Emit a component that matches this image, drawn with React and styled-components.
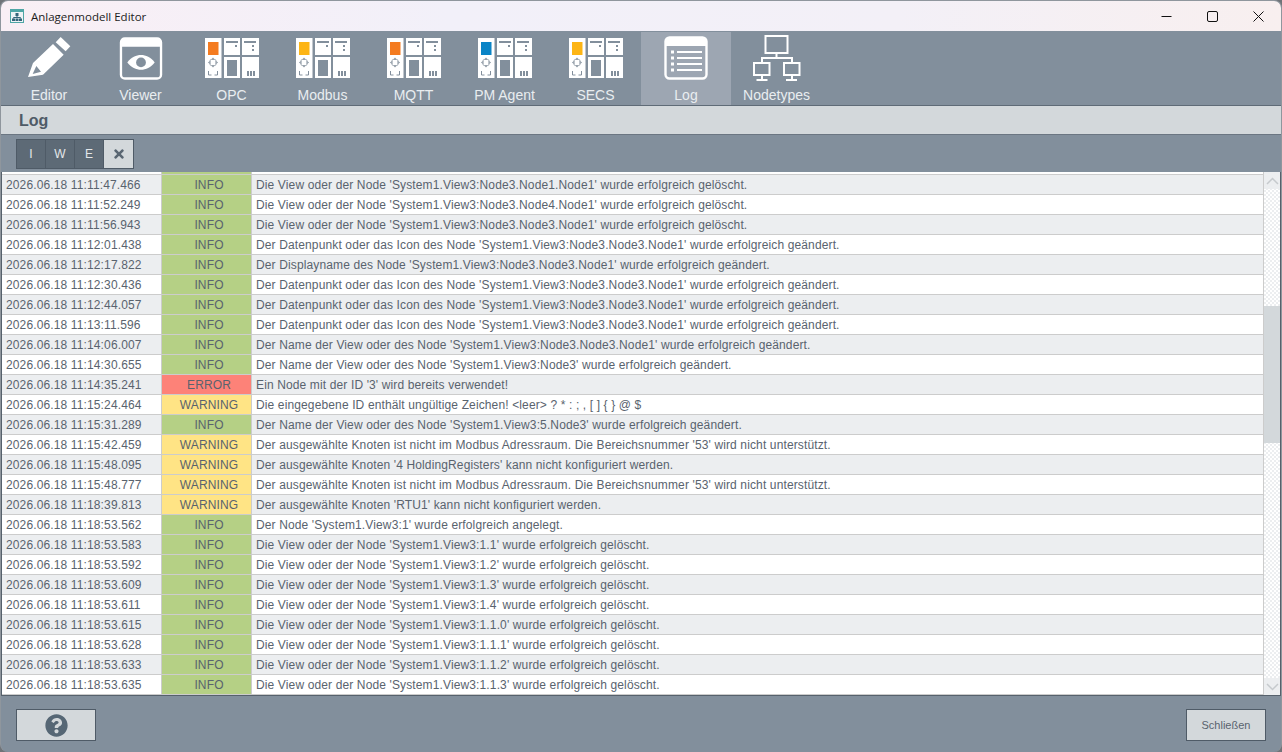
import React from 'react'
import styled, { createGlobalStyle } from 'styled-components'
import { FaQuestionCircle, FaTimes } from 'react-icons/fa'

const GlobalStyle = createGlobalStyle`
    html, body {
        margin: 0;
        padding: 0;
        background: #6f7378;
    }
    * {
        box-sizing: border-box;
    }
`

const Window = styled.div`
    width: 1282px;
    height: 752px;
    display: flex;
    flex-direction: column;
    overflow: hidden;
    background: #828f9c;
    border: 1px solid #8f969d;
    border-bottom: 0;
    border-radius: 8px;
    font-family: 'Liberation Sans', Arial, sans-serif;
`

const TitleBar = styled.div`
    height: 30px;
    flex: none;
    display: flex;
    align-items: center;
    padding-left: 9px;
    background: linear-gradient(90deg, #f9eff5 0%, #f2f0f9 35%, #f3f0f7 70%, #f8efef 100%);
`

const TitleText = styled.span`
    margin-left: 7px;
    font-family: 'Open Sans', 'Noto Sans', sans-serif;
    font-size: 11.5px;
    color: #1c1c1c;
`

const WindowControls = styled.div`
    margin-left: auto;
    display: flex;
`

const WindowControl = styled.div`
    width: 46px;
    height: 30px;
    display: flex;
    align-items: center;
    justify-content: center;
`

const Tabs = styled.div`
    height: 75px;
    flex: none;
    display: flex;
    padding: 1px 0 0 2px;
    background: #828f9c;
    border-bottom: 1px solid #5f6b77;
`

const Tab = styled.div`
    width: ${(p) => p.$width}px;
    height: 73px;
    display: flex;
    flex-direction: column;
    align-items: center;
    background: ${(p) => (p.$active ? '#9da6b2' : 'transparent')};
    color: #e9edf0;
`

const TabIcon = styled.div`
    height: 52px;
    margin-bottom: 2px;
    flex: none;
    display: flex;
    align-items: center;
    justify-content: center;
`

const TabLabel = styled.span`
    font-size: 14px;
    line-height: 18px;
`

const Heading = styled.div`
    height: 29px;
    flex: none;
    display: flex;
    align-items: center;
    padding: 1px 0 0 18px;
    background: #d3d8db;
    border-bottom: 1px solid #6b7682;
    font-size: 16px;
    font-weight: bold;
    color: #4f5b67;
`

const FilterBar = styled.div`
    height: 37px;
    flex: none;
    display: flex;
    padding: 4px 0 0 15px;
`

const FilterGroup = styled.div`
    display: flex;
    height: 30px;
    border: 1px solid #4f5b67;
`

const FilterButton = styled.div`
    width: 29px;
    display: flex;
    align-items: center;
    justify-content: center;
    font-size: 12px;
    color: ${(p) => (p.$clear ? '#5a6773' : '#e3e7ea')};
    background: ${(p) => (p.$clear ? '#d3d8db' : '#5d6a76')};
    border-right: ${(p) => (p.$last ? '0' : '1px solid #4f5b67')};
`

const TableFrame = styled.div`
    height: 524px;
    flex: none;
    display: flex;
    background: #fff;
    border-bottom: 1px solid #56616c;
    border-right: 1px solid #56616c;
    border-left: 1px solid #56616c;
`

const Rows = styled.div`
    flex: 1;
    overflow: hidden;
    border-right: 1px solid #cccccc;
`

const Row = styled.div`
    height: ${(p) => (p.$stub ? 3 : 20)}px;
    display: grid;
    grid-template-columns: 159px 91px 1fr;
    grid-auto-rows: ${(p) => (p.$stub ? 2 : 19)}px;
    background: ${(p) => (p.$shaded ? '#eceef0' : '#ffffff')};
    border-bottom: 1px solid #cccccc;
    font-size: 12px;
    letter-spacing: 0.13px;
    line-height: 20px;
    color: #59636e;
    white-space: nowrap;
`

const TimeCell = styled.div`
    padding-left: 4px;
`

const LevelColors = {
    INFO: '#b5d085',
    WARNING: '#ffe485',
    ERROR: '#fd8278',
}

const LevelCell = styled.div`
    padding-left: 5px;
    text-align: center;
    background: ${(p) => LevelColors[p.$level]};
    border-left: 1px solid #cccccc;
    border-right: 1px solid #cccccc;
`

const MessageCell = styled.div`
    padding-left: 4px;
`

const Scrollbar = styled.div`
    width: 16px;
    flex: none;
    display: flex;
    flex-direction: column;
    background-color: #fff;
    background-image: repeating-conic-gradient(#eceef0 0% 25%, #fff 0% 50%);
    background-size: 4px 4px;
`

const ScrollArrow = styled.div`
    height: 17px;
    flex: none;
    display: flex;
    align-items: center;
    justify-content: center;
    background: #eceef0;
`

const ScrollThumb = styled.div`
    height: 137px;
    margin-top: 117px;
    background: #d3d8db;
`

const ScrollArrowBottom = styled(ScrollArrow)`
    margin-top: auto;
`

const Footer = styled.div`
    flex: 1;
    display: flex;
    justify-content: space-between;
    padding: 13px 15px 0;
`

const FooterButton = styled.div`
    width: 80px;
    height: 32px;
    display: flex;
    align-items: center;
    justify-content: center;
    background: #d3d8db;
    border: 1px solid #4f5b67;
    font-size: 11px;
    color: #59636e;
`

const AppIcon = () => (
    <svg width="14" height="14" viewBox="0 0 14 14">
        <rect width="14" height="14" fill="#4ea6a6" />
        <rect x="1" y="1" width="12" height="12" fill="#eef3f5" />
        <rect x="1" y="1" width="12" height="2" fill="#4ea6a6" />
        <rect x="5.5" y="4" width="3" height="3" fill="#35657a" />
        <path d="M7 7v2M3.5 9.5V8.5h7v1" stroke="#35657a" fill="none" />
        <rect x="2" y="9.5" width="3" height="2.5" fill="#35657a" />
        <rect x="5.5" y="9.5" width="3" height="2.5" fill="#35657a" />
        <rect x="9" y="9.5" width="3" height="2.5" fill="#35657a" />
    </svg>
)

const PencilIcon = () => (
    <svg width="44" height="44" viewBox="0 0 132 132">
        <path d="M101 3L130 31L116 46L86 19Z" fill="#fff" />
        <path
            fillRule="evenodd"
            d="M78 24L110 56L48 116L3 123L18 81ZM28 90L17 114L42 107Z"
            fill="#fff"
        />
    </svg>
)

const ViewerIcon = () => (
    <svg width="44" height="43" viewBox="0 0 44 44">
        <rect x="1.5" y="1.5" width="41" height="41" rx="4" fill="none" stroke="#fff" strokeWidth="2.4" />
        <path d="M1.5 10V5.5a4 4 0 0 1 4-4h33a4 4 0 0 1 4 4V10Z" fill="#fff" />
        <path d="M8 26c4-5 9-7.500 14-7.500s10 2.500 14 7.500c-4 5-9 7.500-14 7.500s-10-2.500-14-7.500Z" fill="#fff" />
        <circle cx="22" cy="26" r="5" fill="#828f9c" />
    </svg>
)

const LogIcon = () => (
    <svg width="44" height="44" viewBox="0 0 44 44">
        <rect x="1.5" y="1.500" width="41" height="41" rx="4" fill="none" stroke="#fff" strokeWidth="2.4" />
        <path d="M1.500 10V5.500a4 4 0 0 1 4-4h33a4 4 0 0 1 4 4V10Z" fill="#fff" />
        {[16, 22, 28, 34].map((y) => (
            <g key={y} fill="#fff">
                <rect x="7" y={y - 1.5} width="3" height="3" />
                <rect x="13" y={y - 1} width="25" height="2" />
            </g>
        ))}
    </svg>
)

const NodetypesIcon = () => (
    <svg width="48" height="46" viewBox="0 0 48 46" fill="none" stroke="#fff" strokeWidth="2">
        <rect x="12.500" y="1" width="22" height="17" />
        <path d="M23.500 18v5M9 28v-5h30v5" />
        <rect x="1" y="28" width="15.500" height="12" />
        <rect x="31" y="28" width="15.500" height="12" />
        <path d="M9 40v4M3.500 45h11M39 40v4M33 45h11" />
    </svg>
)

const ModuleIcon = ({ accent }) => (
    <svg width="54" height="40" viewBox="0 0 54 40">
        <g fill="#fff">
            <rect width="16.500" height="40" />
            <rect x="19" width="16" height="17" />
            <rect x="19" y="19" width="16" height="21" />
            <rect x="37" width="17" height="17" />
            <rect x="37" y="19" width="17" height="21" />
        </g>
        <rect x="3" y="4" width="10.500" height="13" fill={accent} />
        <g fill="#828f9c">
            <rect x="21" y="3" width="12" height="2" />
            <rect x="30" y="7" width="2" height="2" />
            <rect x="39" y="3" width="12" height="2" />
            <rect x="47" y="7" width="2" height="2" />
            <rect x="47" y="11" width="2" height="2" />
            <rect x="22" y="22" width="10" height="16" />
            <rect x="42" y="33" width="2" height="5" />
            <rect x="45" y="33" width="2" height="5" />
            <rect x="48" y="33" width="2" height="5" />
            <path d="M8 19.500l2 2.500H6ZM8 29.500l2-2.500H6ZM3 24.500l2.500-2v4ZM13 24.500l-2.500-2v4Z" />
        </g>
        <circle cx="8" cy="24.500" r="3.600" fill="none" stroke="#aab2ba" strokeWidth="1" />
        <path d="M3.500 33v4h3M12.500 33v4h-3" fill="none" stroke="#828f9c" strokeWidth="1" />
    </svg>
)

const tabs = [
    { label: 'Editor', width: 92, icon: <PencilIcon /> },
    { label: 'Viewer', width: 91, icon: <ViewerIcon /> },
    { label: 'OPC', width: 91, icon: <ModuleIcon accent="#f47b20" /> },
    { label: 'Modbus', width: 91, icon: <ModuleIcon accent="#fdb515" /> },
    { label: 'MQTT', width: 91, icon: <ModuleIcon accent="#f47b20" /> },
    { label: 'PM Agent', width: 91, icon: <ModuleIcon accent="#0a84c6" /> },
    { label: 'SECS', width: 91, icon: <ModuleIcon accent="#fdb515" /> },
    { label: 'Log', width: 90, icon: <LogIcon />, active: true },
    { label: 'Nodetypes', width: 91, icon: <NodetypesIcon /> },
]

const entries = [
    ['2026.06.18 11:11:47.466', 'INFO', "Die View oder der Node 'System1.View3:Node3.Node1.Node1' wurde erfolgreich gelöscht."],
    ['2026.06.18 11:11:52.249', 'INFO', "Die View oder der Node 'System1.View3:Node3.Node4.Node1' wurde erfolgreich gelöscht."],
    ['2026.06.18 11:11:56.943', 'INFO', "Die View oder der Node 'System1.View3:Node3.Node3.Node1' wurde erfolgreich gelöscht."],
    ['2026.06.18 11:12:01.438', 'INFO', "Der Datenpunkt oder das Icon des Node 'System1.View3:Node3.Node3.Node1' wurde erfolgreich geändert."],
    ['2026.06.18 11:12:17.822', 'INFO', "Der Displayname des Node 'System1.View3:Node3.Node3.Node1' wurde erfolgreich geändert."],
    ['2026.06.18 11:12:30.436', 'INFO', "Der Datenpunkt oder das Icon des Node 'System1.View3:Node3.Node3.Node1' wurde erfolgreich geändert."],
    ['2026.06.18 11:12:44.057', 'INFO', "Der Datenpunkt oder das Icon des Node 'System1.View3:Node3.Node3.Node1' wurde erfolgreich geändert."],
    ['2026.06.18 11:13:11.596', 'INFO', "Der Datenpunkt oder das Icon des Node 'System1.View3:Node3.Node3.Node1' wurde erfolgreich geändert."],
    ['2026.06.18 11:14:06.007', 'INFO', "Der Name der View oder des Node 'System1.View3:Node3.Node3.Node1' wurde erfolgreich geändert."],
    ['2026.06.18 11:14:30.655', 'INFO', "Der Name der View oder des Node 'System1.View3:Node3' wurde erfolgreich geändert."],
    ['2026.06.18 11:14:35.241', 'ERROR', "Ein Node mit der ID '3' wird bereits verwendet!"],
    ['2026.06.18 11:15:24.464', 'WARNING', 'Die eingegebene ID enthält ungültige Zeichen! <leer> ? * : ; , [ ] { } @ $'],
    ['2026.06.18 11:15:31.289', 'INFO', "Der Name der View oder des Node 'System1.View3:5.Node3' wurde erfolgreich geändert."],
    ['2026.06.18 11:15:42.459', 'WARNING', "Der ausgewählte Knoten ist nicht im Modbus Adressraum. Die Bereichsnummer '53' wird nicht unterstützt."],
    ['2026.06.18 11:15:48.095', 'WARNING', "Der ausgewählte Knoten '4 HoldingRegisters' kann nicht konfiguriert werden."],
    ['2026.06.18 11:15:48.777', 'WARNING', "Der ausgewählte Knoten ist nicht im Modbus Adressraum. Die Bereichsnummer '53' wird nicht unterstützt."],
    ['2026.06.18 11:18:39.813', 'WARNING', "Der ausgewählte Knoten 'RTU1' kann nicht konfiguriert werden."],
    ['2026.06.18 11:18:53.562', 'INFO', "Der Node 'System1.View3:1' wurde erfolgreich angelegt."],
    ['2026.06.18 11:18:53.583', 'INFO', "Die View oder der Node 'System1.View3:1.1' wurde erfolgreich gelöscht."],
    ['2026.06.18 11:18:53.592', 'INFO', "Die View oder der Node 'System1.View3:1.2' wurde erfolgreich gelöscht."],
    ['2026.06.18 11:18:53.609', 'INFO', "Die View oder der Node 'System1.View3:1.3' wurde erfolgreich gelöscht."],
    ['2026.06.18 11:18:53.611', 'INFO', "Die View oder der Node 'System1.View3:1.4' wurde erfolgreich gelöscht."],
    ['2026.06.18 11:18:53.615', 'INFO', "Die View oder der Node 'System1.View3:1.1.0' wurde erfolgreich gelöscht."],
    ['2026.06.18 11:18:53.628', 'INFO', "Die View oder der Node 'System1.View3:1.1.1' wurde erfolgreich gelöscht."],
    ['2026.06.18 11:18:53.633', 'INFO', "Die View oder der Node 'System1.View3:1.1.2' wurde erfolgreich gelöscht."],
    ['2026.06.18 11:18:53.635', 'INFO', "Die View oder der Node 'System1.View3:1.1.3' wurde erfolgreich gelöscht."],
]

const App = () => {
    return (
        <Window>
            <GlobalStyle />
            <TitleBar>
                <AppIcon />
                <TitleText>Anlagenmodell Editor</TitleText>
                <WindowControls>
                    <WindowControl>
                        <svg width="11" height="11" viewBox="0 0 11 11">
                            <path d="M0.500 5.500h10" stroke="#111" />
                        </svg>
                    </WindowControl>
                    <WindowControl>
                        <svg width="11" height="11" viewBox="0 0 11 11">
                            <rect x="0.500" y="0.500" width="10" height="10" rx="1.500" fill="none" stroke="#111" />
                        </svg>
                    </WindowControl>
                    <WindowControl>
                        <svg width="11" height="11" viewBox="0 0 11 11">
                            <path d="M0.500 0.500l10 10M10.500 0.500l-10 10" stroke="#111" />
                        </svg>
                    </WindowControl>
                </WindowControls>
            </TitleBar>
            <Tabs>
                {tabs.map((tab) => (
                    <Tab key={tab.label} $width={tab.width} $active={tab.active}>
                        <TabIcon>{tab.icon}</TabIcon>
                        <TabLabel>{tab.label}</TabLabel>
                    </Tab>
                ))}
            </Tabs>
            <Heading>Log</Heading>
            <FilterBar>
                <FilterGroup>
                    <FilterButton>I</FilterButton>
                    <FilterButton>W</FilterButton>
                    <FilterButton>E</FilterButton>
                    <FilterButton $clear $last>
                        <FaTimes size={14} />
                    </FilterButton>
                </FilterGroup>
            </FilterBar>
            <TableFrame>
                <Rows>
                    <Row $stub>
                        <TimeCell />
                        <LevelCell $level="INFO" />
                        <MessageCell />
                    </Row>
                    {entries.map(([time, level, message], i) => (
                        <Row key={time} $shaded={i % 2 === 0}>
                            <TimeCell>{time}</TimeCell>
                            <LevelCell $level={level}>{level}</LevelCell>
                            <MessageCell>{message}</MessageCell>
                        </Row>
                    ))}
                </Rows>
                <Scrollbar>
                    <ScrollArrow>
                        <svg width="13" height="8" viewBox="0 0 13 8">
                            <path d="M1 7l5.500-5.500L12 7" fill="none" stroke="#c6cacd" strokeWidth="1.500" />
                        </svg>
                    </ScrollArrow>
                    <ScrollThumb />
                    <ScrollArrowBottom>
                        <svg width="13" height="8" viewBox="0 0 13 8">
                            <path d="M1 1l5.500 5.500L12 1" fill="none" stroke="#c6cacd" strokeWidth="1.500" />
                        </svg>
                    </ScrollArrowBottom>
                </Scrollbar>
            </TableFrame>
            <Footer>
                <FooterButton>
                    <FaQuestionCircle size={23} color="#566775" />
                </FooterButton>
                <FooterButton>Schließen</FooterButton>
            </Footer>
        </Window>
    )
}

export default App
